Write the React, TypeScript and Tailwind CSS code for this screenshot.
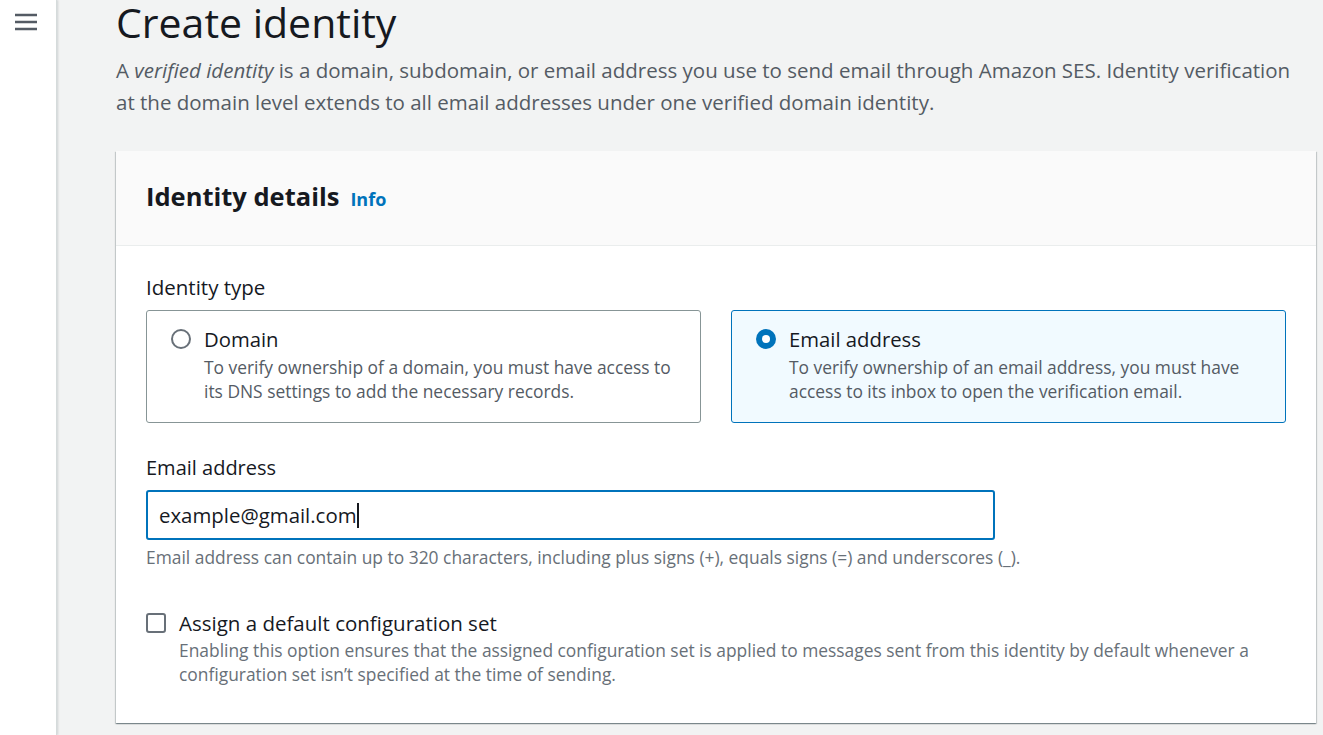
import { useState } from "react";

const font = { fontFamily: '"Open Sans", "Noto Sans", Arial, sans-serif' };

const Radio = ({ checked }: { checked: boolean }) =>
  checked ? (
    <span className="mt-[3px] flex h-5 w-5 shrink-0 items-center justify-center rounded-full bg-[#0073bb]">
      <span className="h-2 w-2 rounded-full bg-white" />
    </span>
  ) : (
    <span className="mt-[3px] h-5 w-5 shrink-0 rounded-full border-2 border-[#687078] bg-white" />
  );

const Tile = ({
  title,
  desc,
  checked,
}: {
  title: string;
  desc: string;
  checked: boolean;
}) => (
  <div
    className={
      checked
        ? "flex gap-[13px] rounded-[3px] border border-[#0073bb] bg-[#f1faff] px-6 pt-[15px] pb-[19px]"
        : "flex gap-[13px] rounded-[3px] border border-[#879596] bg-white px-6 pt-[15px] pb-[19px]"
    }
  >
    <Radio checked={checked} />
    <div>
      <p className="text-[20.3px] leading-[26px] text-[#16191f]">{title}</p>
      <p className="mt-[3px] text-[17.4px] leading-6 text-[#545b64]">{desc}</p>
    </div>
  </div>
);

export default function App() {
  const [email, setEmail] = useState("example@gmail.com");
  return (
    <div style={font} className="flex h-[735px] w-full overflow-hidden bg-[#f2f3f3]">
      <aside className="w-[57px] shrink-0 border-r border-[#d5dbdb] bg-white shadow-[1px_0_2px_rgba(0,28,36,0.15)]">
        <svg className="ml-[15px] mt-[13px]" width="22" height="18" viewBox="0 0 22 18">
          <path d="M0 2h22M0 9h22M0 16h22" stroke="#545b64" strokeWidth="2.4" />
        </svg>
      </aside>

      <main className="flex-1 pl-[59px] pr-[7px]">
        <h1 className="text-[41px] leading-[44px] font-normal text-[#16191f]">Create identity</h1>
        <p className="mt-[10px] pr-4 text-[20.5px] leading-8 text-[#545b64]">
          A <i>verified identity</i> is a domain, subdomain, or email address you use to send
          email through Amazon SES. Identity verification at the domain level extends to all email
          addresses under one verified domain identity.
        </p>

        <section className="mt-[33px] bg-white shadow-[0_1px_1px_rgba(0,28,36,0.3),1px_1px_1px_rgba(0,28,36,0.15),-1px_1px_1px_rgba(0,28,36,0.15)]">
          <div className="flex items-baseline gap-[11px] border-b border-[#eaeded] bg-[#fafafa] px-[30px] pt-[27px] pb-[31px]">
            <h2 className="text-[25.5px] leading-9 font-bold text-[#16191f]">Identity details</h2>
            <span className="text-[18px] font-bold text-[#0073bb]">Info</span>
          </div>

          <div className="px-[30px] pt-[27px] pb-[37px]">
            <p className="text-[20.5px] leading-7 text-[#16191f]">Identity type</p>
            <div className="mt-[9px] grid w-[1140px] grid-cols-2 gap-[30px]">
              <Tile
                checked={false}
                title="Domain"
                desc="To verify ownership of a domain, you must have access to its DNS settings to add the necessary records."
              />
              <Tile
                checked={true}
                title="Email address"
                desc="To verify ownership of an email address, you must have access to its inbox to open the verification email."
              />
            </div>

            <p className="mt-[31px] text-[20px] leading-7 text-[#16191f]">Email address</p>
            <div className="relative mt-[8px] w-[849px]">
              <input
                value={email}
                onChange={(e) => setEmail(e.target.value)}
                style={font}
                className="block h-[50px] w-full rounded-[3px] border-2 border-[#0073bb] px-[11px] text-[20.4px] text-[#16191f] outline-none"
              />
              <span className="pointer-events-none absolute top-[13px] left-[211px] h-[25px] w-[2px] bg-[#16191f]" />
            </div>
            <p className="mt-[5px] text-[17.4px] leading-6 text-[#687078]">
              Email address can contain up to 320 characters, including plus signs (+), equals
              signs (=) and underscores (_).
            </p>

            <div className="mt-[41px] flex gap-[13px]">
              <span className="mt-[3px] h-5 w-5 shrink-0 rounded-[3px] border-2 border-[#687078] bg-white" />
              <div>
                <p className="text-[20.5px] leading-[26px] text-[#16191f]">
                  Assign a default configuration set
                </p>
                <p className="mt-[2px] text-[17.4px] leading-6 text-[#687078]">
                  Enabling this option ensures that the assigned configuration set is applied to
                  messages sent from this identity by default whenever a configuration set isn’t
                  specified at the time of sending.
                </p>
              </div>
            </div>
          </div>
        </section>
      </main>
    </div>
  );
}
